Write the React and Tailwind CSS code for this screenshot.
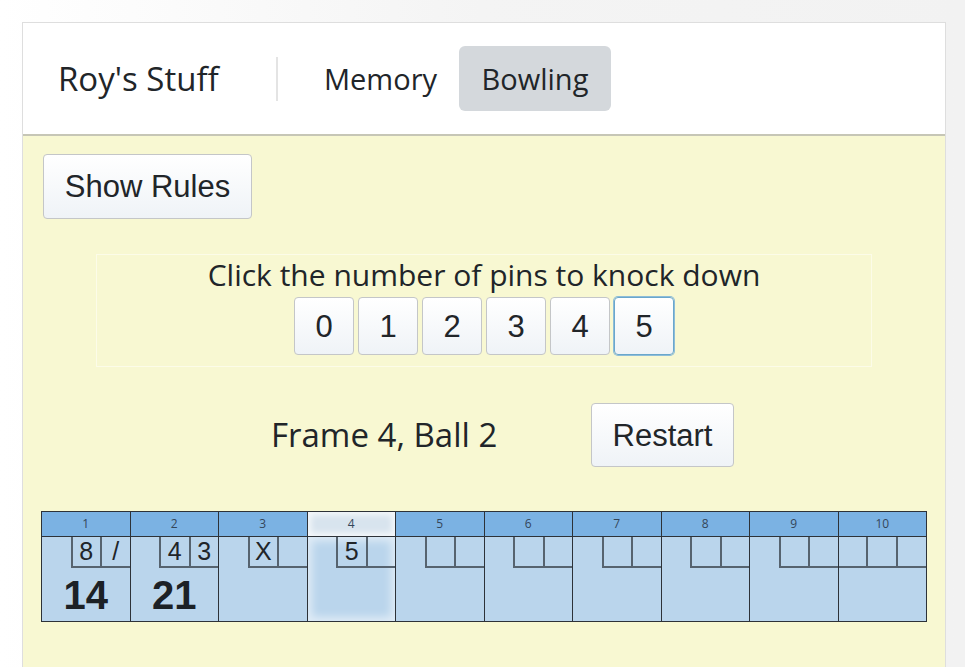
import { useState } from 'react';

const seg = { fontFamily: '"Open Sans", "Noto Sans", sans-serif' };

const frames = [
  { balls: ['8', '/'], score: '14' },
  { balls: ['4', '3'], score: '21' },
  { balls: ['X', ''], score: '' },
  { balls: ['5', ''], score: '', current: true },
  { balls: ['', ''], score: '' },
  { balls: ['', ''], score: '' },
  { balls: ['', ''], score: '' },
  { balls: ['', ''], score: '' },
  { balls: ['', ''], score: '' },
  { balls: ['', '', ''], score: '', tenth: true },
];

function Btn({ children, className = '', focused = false }) {
  return (
    <button
      className={
        'rounded-[4px] border bg-gradient-to-b from-white to-[#eff3f7] font-["Liberation_Sans",Arial,sans-serif] text-[31px] leading-none text-[#212529] ' +
        (focused ? 'border-[#6aa7cc] shadow-[0_0_0_1px_#8dbcd8]' : 'border-[#c4c6c8]') +
        ' ' +
        className
      }
    >
      {children}
    </button>
  );
}

function Frame({ n, frame, last }) {
  return (
    <div className={'flex flex-1 flex-col ' + (last ? '' : 'border-r border-[#2d3238]')}>
      <div
        className={
          'flex h-[25px] items-center justify-center border-b border-[#2d3238] text-[12px] text-[#34465a] ' +
          (frame.current ? 'bg-[#d8e4ee] shadow-[inset_0_0_6px_3px_rgba(255,255,255,0.75)]' : 'bg-[#7bb2e3]')
        }
        style={seg}
      >
        {n}
      </div>
      <div
        className={
          'flex h-[84px] flex-col bg-[#bad5ec] ' +
          (frame.current ? 'shadow-[inset_0_0_8px_4px_rgba(255,255,255,0.55)]' : '')
        }
      >
        <div className="flex justify-end">
          {frame.balls.map((b, i) => (
            <div
              key={i}
              className={
                'flex h-[31px] items-center justify-center border-b-2 border-[#56636f] font-["Liberation_Sans",Arial,sans-serif] text-[25px] text-[#212529] ' +
                (frame.tenth ? 'flex-1 ' : 'w-[29.5px] ') +
                (frame.tenth && i === 0 ? '' : 'border-l-2')
              }
            >
              {b}
            </div>
          ))}
        </div>
        <div className="flex flex-1 items-center justify-center font-['Liberation_Sans',Arial,sans-serif] text-[40px] font-bold leading-none text-[#1c2126]">
          {frame.score}
        </div>
      </div>
    </div>
  );
}

export default function App() {
  const [pins] = useState([0, 1, 2, 3, 4, 5]);

  return (
    <div className="min-h-[667px] bg-gradient-to-r from-white via-[#f4f4f4] to-[#f2f2f2] px-[22px] pt-[22px]">
      <div className="flex min-h-[645px] w-[924px] flex-col border-x border-t border-[#dedede] bg-[#f8f8d2]">
        <header className="flex h-[113px] items-center border-b-2 border-[#c6c6b6] bg-white pl-[35px]" style={seg}>
          <span className="w-[218px] text-[33px] text-[#212529]">Roy's Stuff</span>
          <div className="h-[44px] w-[2px] bg-[#e4e4e4]" />
          <nav className="ml-[23px] flex items-center">
            <a className="flex h-[65px] w-[158px] items-center rounded-md pl-[23px] text-[29px] text-[#212529]">Memory</a>
            <a className="flex h-[65px] w-[152px] items-center justify-center rounded-md bg-[#d4d8dc] text-[29px] text-[#212529]">Bowling</a>
          </nav>
        </header>

        <div className="px-[20px] pt-[18px]">
          <Btn className="h-[65px] w-[209px]">Show Rules</Btn>
        </div>

        <div className="mx-auto mt-[35px] flex w-[776px] flex-col items-center border border-[#fcfce8] pb-[11px]">
          <p className="text-[30px] leading-[40px] text-[#212529]" style={seg}>
            Click the number of pins to knock down
          </p>
          <div className="mt-[2px] flex gap-[4px]">
            {pins.map((p) => (
              <Btn key={p} focused={p === 5} className="h-[58px] w-[60px]">
                {p}
              </Btn>
            ))}
          </div>
        </div>

        <div className="mt-[36px] flex items-center pl-[248px]">
          <span className="w-[320px] text-[33px] text-[#212529]" style={seg}>Frame 4, Ball 2</span>
          <Btn className="h-[64px] w-[143px]">Restart</Btn>
        </div>

        <div className="mx-[18px] mt-[44px] flex border border-[#2d3238]">
          {frames.map((f, i) => (
            <Frame key={i} n={i + 1} frame={f} last={i === frames.length - 1} />
          ))}
        </div>
      </div>
    </div>
  );
}
